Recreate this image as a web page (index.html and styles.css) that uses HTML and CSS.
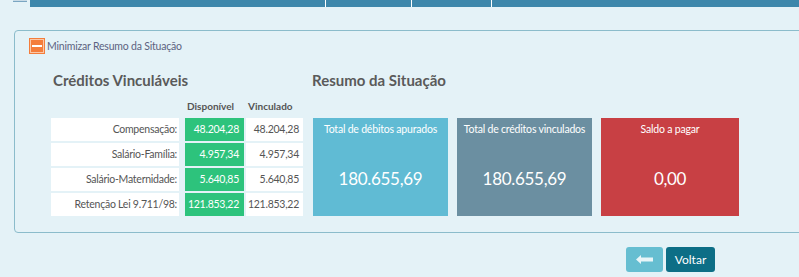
FILE: index.html
```html
<!DOCTYPE html>
<html lang="pt">
<head>
<meta charset="utf-8">
<link rel="stylesheet" href="styles.css">
</head>
<body>
<div class="topbar">
  <div class="chk"></div>
  <div class="bar">
    <div class="bcell c1"></div>
    <div class="bcell c2"></div>
    <div class="bcell c3"></div>
    <div class="bcell c4"></div>
  </div>
</div>
<div class="panel">
  <div class="toggle">
    <span class="minus"><span class="minus-line"></span></span>
    <span class="toggle-text">Minimizar Resumo da Situação</span>
  </div>
  <div class="content">
    <div class="credits">
      <h2 class="title">Créditos Vinculáveis</h2>
      <div class="thead">
        <span class="th-disp">Disponível</span>
        <span class="th-vinc">Vinculado</span>
      </div>
      <div class="row">
        <span class="lbl">Compensação:</span>
        <span class="disp">48.204,28</span>
        <span class="vinc">48.204,28</span>
      </div>
      <div class="row">
        <span class="lbl">Salário-Família:</span>
        <span class="disp">4.957,34</span>
        <span class="vinc">4.957,34</span>
      </div>
      <div class="row">
        <span class="lbl">Salário-Maternidade:</span>
        <span class="disp">5.640,85</span>
        <span class="vinc">5.640,85</span>
      </div>
      <div class="row">
        <span class="lbl">Retenção Lei 9.711/98:</span>
        <span class="disp">121.853,22</span>
        <span class="vinc">121.853,22</span>
      </div>
    </div>
    <div class="resumo">
      <h2 class="title">Resumo da Situação</h2>
      <div class="cards">
        <div class="card card-deb">
          <div class="card-title">Total de débitos apurados</div>
          <div class="card-value">180.655,69</div>
        </div>
        <div class="card card-cred">
          <div class="card-title">Total de créditos vinculados</div>
          <div class="card-value">180.655,69</div>
        </div>
        <div class="card card-saldo">
          <div class="card-title">Saldo a pagar</div>
          <div class="card-value">0,00</div>
        </div>
      </div>
    </div>
  </div>
</div>
<div class="actions">
  <button class="btn btn-back" aria-label="Voltar">
    <svg width="17" height="9" viewBox="0 0 17 9"><path d="M0 4.5 L5 0 L5 2.5 L17 2.5 L17 6.5 L5 6.5 L5 9 Z" fill="#ffffff" fill-opacity="0.85"/></svg>
  </button>
  <button class="btn btn-voltar">Voltar</button>
</div>
</body>
</html>
```
FILE: styles.css
```css
html, body {
  margin: 0;
  padding: 0;
  background: #e4f2f7;
  overflow: hidden;
  font-family: Lato, "Noto Sans", sans-serif;
}
.topbar {
  display: flex;
  align-items: flex-start;
  height: 6px;
}
.chk {
  width: 14px;
  height: 1px;
  margin-left: 13px;
  margin-right: 3px;
  background: #c9dbe6;
  border-bottom: 1px solid #7aa6c2;
}
.bar {
  flex: 1;
  display: flex;
  height: 7px;
  background: #3d87ab;
}
.bcell { height: 7px; border-right: 1px solid #ffffff; }
.c1 { width: 295px; }
.c2 { width: 85px; }
.c3 { width: 79px; }
.c4 { flex: 1; border-right: none; }

.panel {
  margin: 24px -20px 0 14px;
  height: 201px;
  border: 1px solid #8bbccb;
  border-radius: 4px;
  box-sizing: content-box;
}
.toggle {
  display: flex;
  align-items: center;
  margin: 7px 0 0 14px;
  height: 16px;
}
.minus {
  box-sizing: border-box;
  width: 16px;
  height: 16px;
  background: #f47d3b;
  border: 1px solid #f47d3b;
  box-shadow: inset 0 0 0 1px #fbc8a8;
  display: flex;
  align-items: center;
  justify-content: center;
}
.minus-line {
  width: 10px;
  height: 2px;
  background: #ffffff;
}
.toggle-text {
  margin-left: 2px;
  font-size: 10.5px;
  letter-spacing: -0.2px;
  color: #5c6280;
}
.content {
  display: flex;
  margin-left: 36px;
}
.title {
  margin: 17px 0 0 2px;
  height: 20px;
  font-size: 15px;
  font-weight: bold;
  color: #5a5a5a;
}
.credits {
  width: 253px;
}
.thead {
  display: flex;
  height: 20px;
  margin-top: 5px;
  font-size: 10px;
  font-weight: bold;
  color: #555555;
  align-items: center;
}
.th-disp { margin-left: 136px; width: 61px; }
.row {
  display: flex;
  height: 23px;
  margin-top: 2px;
  font-size: 10.5px;
  letter-spacing: -0.25px;
  line-height: 23px;
}
.row:first-of-type { margin-top: 0; }
.lbl {
  width: 128px;
  background: #ffffff;
  color: #555555;
  text-align: right;
  padding-right: 2px;
  box-sizing: border-box;
}
.disp {
  width: 59px;
  margin-left: 6px;
  background: #2dc37c;
  color: #ffffff;
  text-align: right;
  padding-right: 5px;
  box-sizing: border-box;
}
.vinc {
  width: 57px;
  margin-left: 2px;
  background: #ffffff;
  color: #555555;
  text-align: right;
  padding-right: 4px;
  box-sizing: border-box;
}
.resumo {
  margin-left: 6px;
}
.cards {
  display: flex;
  gap: 9px;
  margin-top: 27px;
  margin-left: 3px;
}
.card {
  width: 135px;
  height: 98px;
  color: #ffffff;
  text-align: center;
  display: flex;
  flex-direction: column;
}
.card-saldo { width: 138px; }
.card-deb { background: #60bbd4; }
.card-cred { background: #6b8fa1; }
.card-saldo { background: #c84044; }
.card-title {
  font-size: 10.5px;
  letter-spacing: -0.2px;
  margin-top: 5px;
  white-space: nowrap;
}
.card-value {
  font-size: 17px;
  letter-spacing: -0.3px;
  margin-top: 33px;
}
.actions {
  display: flex;
  justify-content: flex-end;
  gap: 3px;
  margin: 14px 84px 0 0;
}
.btn {
  height: 25px;
  border: none;
  border-radius: 3px;
  padding: 0;
  font-family: inherit;
  display: flex;
  align-items: center;
  justify-content: center;
}
.btn-back {
  width: 37px;
  background: #66bed1;
}
.btn-voltar {
  width: 49px;
  background: #0d6e86;
  color: #ffffff;
  font-size: 12px;
}
```
